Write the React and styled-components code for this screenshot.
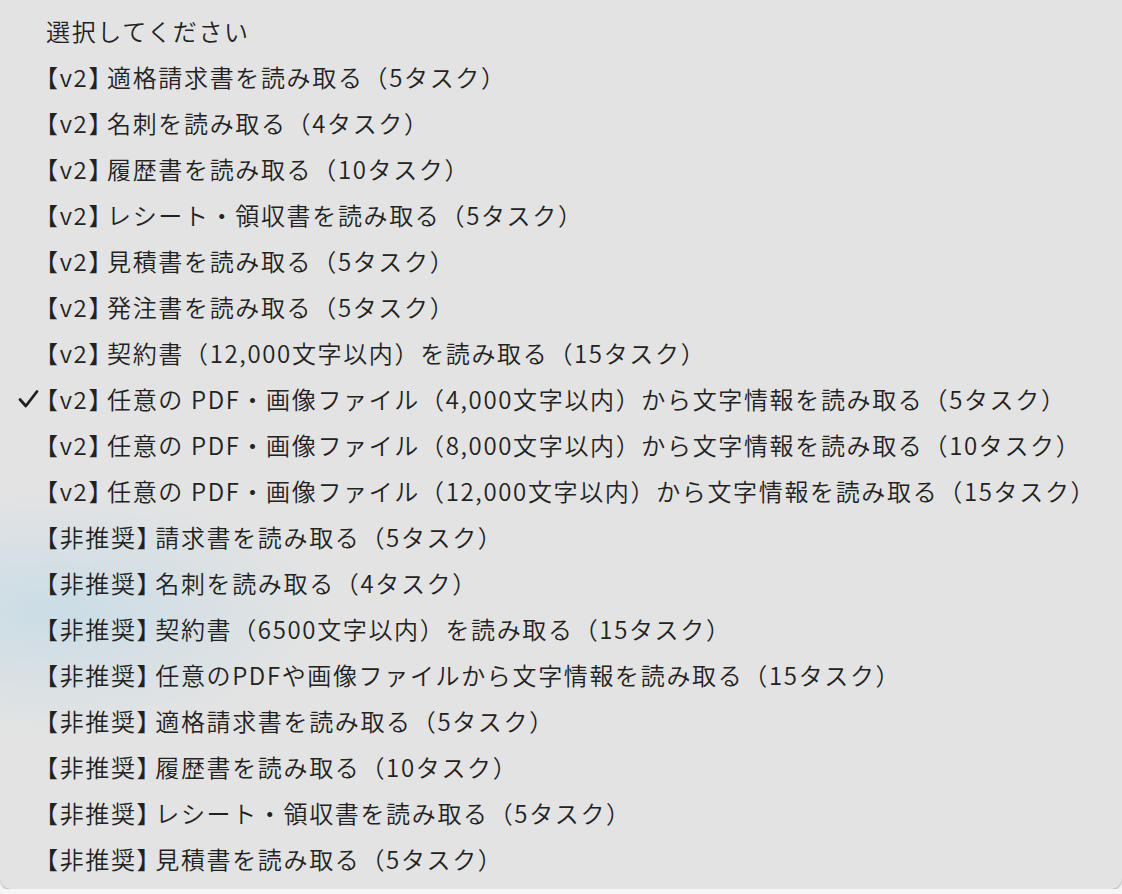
import React from 'react';
import styled, { createGlobalStyle } from 'styled-components';

const GlobalStyle = createGlobalStyle`
  html, body {
    margin: 0;
    padding: 0;
    background: #f6f6f6;
  }
  body {
    font-family: "Noto Sans CJK JP", "Noto Sans", sans-serif;
  }
`;

const options = [
  ['', '選択してください'],
  ['【v2】', '適格請求書を読み取る（5タスク）'],
  ['【v2】', '名刺を読み取る（4タスク）'],
  ['【v2】', '履歴書を読み取る（10タスク）'],
  ['【v2】', 'レシート・領収書を読み取る（5タスク）'],
  ['【v2】', '見積書を読み取る（5タスク）'],
  ['【v2】', '発注書を読み取る（5タスク）'],
  ['【v2】', '契約書（12,000文字以内）を読み取る（15タスク）'],
  ['【v2】', '任意の PDF・画像ファイル（4,000文字以内）から文字情報を読み取る（5タスク）'],
  ['【v2】', '任意の PDF・画像ファイル（8,000文字以内）から文字情報を読み取る（10タスク）'],
  ['【v2】', '任意の PDF・画像ファイル（12,000文字以内）から文字情報を読み取る（15タスク）'],
  ['【非推奨】', '請求書を読み取る（5タスク）'],
  ['【非推奨】', '名刺を読み取る（4タスク）'],
  ['【非推奨】', '契約書（6500文字以内）を読み取る（15タスク）'],
  ['【非推奨】', '任意のPDFや画像ファイルから文字情報を読み取る（15タスク）'],
  ['【非推奨】', '適格請求書を読み取る（5タスク）'],
  ['【非推奨】', '履歴書を読み取る（10タスク）'],
  ['【非推奨】', 'レシート・領収書を読み取る（5タスク）'],
  ['【非推奨】', '見積書を読み取る（5タスク）'],
];

const SELECTED = 8;

export default function App() {
  return (
    <>
      <GlobalStyle />
      <Menu>
        {options.map(([tag, label], i) => (
          <Item key={i}>
            <CheckSlot>
              {i === SELECTED && (
                <svg width="21" height="20" viewBox="0 0 21 20">
                  <polyline
                    points="2,10.5 7.8,17 19,2.5"
                    fill="none"
                    stroke="#1f1f1f"
                    strokeWidth="2.8"
                    strokeLinecap="round"
                    strokeLinejoin="round"
                  />
                </svg>
              )}
            </CheckSlot>
            <Label>
              {tag && <Tag>{tag}</Tag>}
              {label}
            </Label>
          </Item>
        ))}
      </Menu>
    </>
  );
}

const Menu = styled.div`
  box-sizing: border-box;
  width: 1122px;
  height: 889px;
  padding-top: 8px;
  border-radius: 0 0 11px 11px;
  background:
    radial-gradient(ellipse 270px 120px at 55px 612px, rgba(200, 220, 230, 0.9), rgba(205, 222, 230, 0) 100%),
    #e3e3e3;
  box-shadow: 0 1px 0 #b9b9b9, 0 2px 3px rgba(0, 0, 0, 0.12);
  overflow: hidden;
`;

const Item = styled.div`
  display: flex;
  align-items: center;
  height: 46px;
`;

const CheckSlot = styled.div`
  width: 46px;
  flex: 0 0 46px;
  display: flex;
  justify-content: flex-end;
  padding-right: 7px;
  box-sizing: border-box;
`;

const Label = styled.span`
  font-size: 24px;
  font-weight: 350;
  letter-spacing: 1.65px;
  color: #222;
  white-space: nowrap;
  line-height: 1;
`;

const Tag = styled.span`
  font-feature-settings: "halt";
  margin-right: 5px;
`;
